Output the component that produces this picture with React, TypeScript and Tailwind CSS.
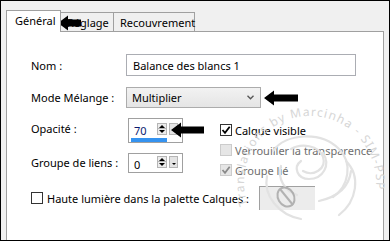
import React from "react";

const font = { fontFamily: '"Noto Sans", "Open Sans", sans-serif' };

function Arrow({ w, className }: { w: number; className: string }) {
  return (
    <svg width={w} height={16} viewBox={`0 0 ${w} 16`} className={className}>
      <path d={`M0 8 L10 0.5 L10 4.5 L${w} 4.5 L${w} 11.5 L10 11.5 L10 15.5 Z`} fill="#000" />
    </svg>
  );
}

function SpinButtons({ caret }: { caret?: boolean }) {
  return (
    <div className="flex items-start gap-[2px]">
      <div className="flex flex-col">
        <div className="w-[10px] h-[6px] border border-[#b5b5b5] bg-[#ececec] flex items-center justify-center">
          <div className="w-0 h-0 border-l-[3px] border-r-[3px] border-b-[3px] border-l-transparent border-r-transparent border-b-black" />
        </div>
        <div className="w-[10px] h-[6px] border border-t-0 border-[#b5b5b5] bg-[#ececec] flex items-center justify-center">
          <div className="w-0 h-0 border-l-[3px] border-r-[3px] border-t-[3px] border-l-transparent border-r-transparent border-t-black" />
        </div>
      </div>
      <div className="w-[9px] h-[12px] border border-[#b5b5b5] bg-[#e4e4e4] flex items-end justify-center pb-[2px]">
        {caret && <div className="w-0 h-0 border-l-[2px] border-r-[2px] border-t-[2px] border-l-transparent border-r-transparent border-t-black" />}
      </div>
    </div>
  );
}

function Check({ color }: { color: string }) {
  return (
    <svg width="10" height="10" viewBox="0 0 10 10">
      <path d="M1.5 5 L4 7.8 L8.7 1.8" stroke={color} strokeWidth="1.8" fill="none" />
    </svg>
  );
}

function Watermark() {
  const cx = 309;
  const cy = 181;
  const r = 66;
  const a0 = (200 * Math.PI) / 180;
  const sx = cx + r * Math.cos(a0);
  const sy = cy - r * Math.sin(a0);
  const ex = cx + r * Math.cos((-30 * Math.PI) / 180);
  const ey = cy - r * Math.sin((-30 * Math.PI) / 180);
  const d = `M${sx} ${sy} A${r} ${r} 0 1 1 ${ex} ${ey}`;
  return (
    <svg width="390" height="241" className="absolute left-0 top-0 pointer-events-none">
      <defs>
        <path id="wm" d={d} />
      </defs>
      <text fontSize="12" fill="#d6d6d6" letterSpacing="1.2" style={font}>
        <textPath href="#wm">Translations by Marcinha - SIM-PSP</textPath>
      </text>
      <g stroke="#e2e2e2" strokeWidth="2.2" fill="none" strokeLinecap="round">
        <path d="M272 150 C285 132 320 130 338 148 C352 162 348 185 332 196" />
        <path d="M290 148 C300 142 318 144 322 156 C326 168 312 176 302 170" />
        <path d="M266 175 C262 195 278 214 300 218" />
        <path d="M300 160 C292 166 296 178 308 178 C322 178 330 164 322 152" />
        <path d="M345 160 C360 175 356 200 338 214" />
        <path d="M318 200 C336 196 348 186 350 170" />
        <path d="M280 165 C276 178 284 190 296 194" />
      </g>
      <g stroke="#8c8c8c" strokeWidth="2" fill="none" opacity="0.6">
        <ellipse cx="285" cy="196" rx="8" ry="10" transform="rotate(-30 285 196)" />
        <path d="M279 188 L292 204" />
      </g>
    </svg>
  );
}

export default function App() {
  return (
    <div
      className="w-[390px] h-[241px] border border-black bg-[#f0f0f0] relative overflow-hidden text-[11px] leading-none text-[#000] whitespace-nowrap"
      style={font}
    >
      <div className="pl-[5px] pt-[9px]">
        {/* tabs */}
        <div className="flex items-end h-[21px]">
          <div className="relative z-10 w-[55px] h-[22px] -mb-px bg-white border border-b-0 border-[#a0a0a0] flex items-center pl-[8px] pb-[2px]">
            Général
          </div>
          <div className="w-[53px] h-[19px] bg-[#f0f0f0] border border-b-0 border-l-0 border-[#a0a0a0] flex items-center pl-[6px]">
            Réglage
          </div>
          <div className="w-[81px] h-[19px] bg-[#f0f0f0] border border-b-0 border-l-0 border-[#a0a0a0] flex items-center pl-[6px]">
            Recouvrement
          </div>
        </div>

        {/* panel */}
        <div className="w-[378px] h-[214px] bg-white border border-[#a0a0a0] pt-[22px] pl-[24px]">
          <div className="flex items-center h-[22px]">
            <div className="w-[95px]">Nom :</div>
            <div className="w-[230px] h-[22px] border border-[#abadb3] flex items-center pl-[6px]">
              Balance des blancs 1
            </div>
          </div>

          <div className="flex items-center h-[21px] mt-[11px]">
            <div className="w-[95px]">Mode Mélange :</div>
            <div className="w-[135px] h-[21px] border border-[#acacac] bg-gradient-to-b from-[#f2f2f2] to-[#e5e5e5] flex items-center justify-between pl-[5px] pr-[6px]">
              <span>Multiplier</span>
              <svg width="7" height="5" viewBox="0 0 7 5">
                <path d="M0.5 0.8 L3.5 3.8 L6.5 0.8" stroke="#555" strokeWidth="1.3" fill="none" />
              </svg>
            </div>
          </div>

          <div className="flex mt-[10px]">
            <div className="flex flex-col">
              <div className="flex items-start h-[25px]">
                <div className="w-[97px] pt-[5px]">Opacité :</div>
                <div className="relative w-[55px] h-[25px] border border-[#a0a0a0] flex items-start justify-between pl-[5px] pr-[4px] pt-[4px]">
                  <span className="text-[#0a1a6e] pt-[2px]">70</span>
                  <SpinButtons />
                  <div className="absolute left-[2px] top-[19px] w-[36px] h-[4px] bg-[#3593f0]" />
                </div>
              </div>
              <div className="flex items-start h-[20px] mt-[10px]">
                <div className="w-[97px] pt-[4px]">Groupe de liens :</div>
                <div className="w-[55px] h-[20px] border border-[#a0a0a0] flex items-start justify-between pl-[5px] pr-[4px] pt-[2px]">
                  <span className="pt-[3px]">0</span>
                  <SpinButtons caret />
                </div>
              </div>
            </div>

            <div className="flex flex-col gap-[8px] ml-[37px] pt-[6px]">
              <div className="flex items-center gap-[3px] h-[12px]">
                <div className="w-[12px] h-[12px] border border-[#333] bg-white flex items-center justify-center">
                  <Check color="#000" />
                </div>
                <span>Calque visible</span>
              </div>
              <div className="flex items-center gap-[3px] h-[12px]">
                <div className="w-[12px] h-[12px] border border-[#cccccc] bg-[#e6e6e6]" />
                <span className="text-[#6d6d6d]">Verrouiller la transparence</span>
              </div>
              <div className="flex items-center gap-[3px] h-[12px]">
                <div className="w-[12px] h-[12px] border border-[#cccccc] bg-[#e6e6e6] flex items-center justify-center">
                  <Check color="#8a8a8a" />
                </div>
                <span className="text-[#6d6d6d]">Groupe lié</span>
              </div>
            </div>
          </div>

          <div className="flex items-start mt-[10px]">
            <div className="flex items-center gap-[4px] mt-[6px]">
              <div className="w-[12px] h-[12px] border border-[#333] bg-white" />
              <span>Haute lumière dans la palette Calques :</span>
            </div>
            <div className="ml-[10px] w-[56px] h-[24px] border-t border-l border-[#a0a0a0] bg-[#ececec]" />
          </div>
        </div>
      </div>

      <Watermark />

      <Arrow w={23} className="absolute left-[57px] top-[14px]" />
      <Arrow w={34} className="absolute left-[263px] top-[89px]" />
      <Arrow w={33} className="absolute left-[170px] top-[121px]" />
    </div>
  );
}
